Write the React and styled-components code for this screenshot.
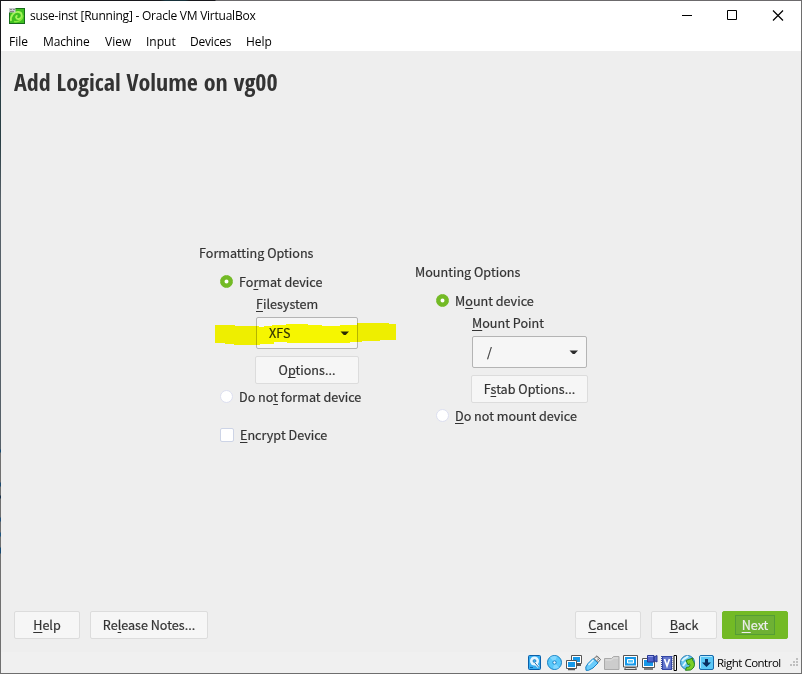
import React from "react";
import styled, { createGlobalStyle } from "styled-components";

const Global = createGlobalStyle`
  * { box-sizing: border-box; }
  body { margin: 0; background: #fff; overflow: hidden; }
`;

const Window = styled.div`
  width: 802px;
  height: 674px;
  display: flex;
  flex-direction: column;
  padding: 1px;
  background:
    linear-gradient(90deg, #17171b 0 160px, #163039 165px 185px, #17171b 190px 215px, #6c6a6c 216px) top / 100% 1px no-repeat,
    linear-gradient(180deg, #17181c 0 50px, #283e44 90px 140px, #566068 200px 449px, #174a72 450px 452px, #707070 453px 482px,
      #1c4b70 483px 486px, #707070 487px 495px, #17304a 496px 498px, #707070 499px 517px, #245078 518px 521px, #707070 522px 532px,
      #1f5680 533px 536px, #707070 537px 547px, #174a72 548px 553px, #707070 554px) left / 1px 100% no-repeat,
    #6e6e6e;
  color: #000;
  font: 12px/16px "Open Sans", "Noto Sans", sans-serif;
`;

const TitleBar = styled.header`
  display: flex;
  height: 29px;
  align-items: center;
  padding-left: 8px;
  background: #fff;
`;

const WindowTitle = styled.span`
  margin-left: 5px;
  letter-spacing: -0.24px;
`;

const Controls = styled.div`
  display: flex;
  margin-left: auto;
  gap: 34px;
  padding-right: 17px;
`;

const MenuBar = styled.nav`
  display: flex;
  height: 21px;
  align-items: center;
  padding: 3px 0 0 8px;
  gap: 16px;
  background: #fff;
  white-space: nowrap;
`;

const MenuItem = styled.span`
  flex: none;
  width: ${(p) => p.$w}px;
  letter-spacing: ${(p) => p.$track}px;
`;

const Guest = styled.main`
  display: flex;
  flex-direction: column;
  height: 601px;
  background: #eee;
  color: #333;
  font: 12.6px/22px "Noto Sans CJK SC", sans-serif;
  -webkit-text-stroke: 0.2px;
`;

const Heading = styled.h1`
  margin: 14px 0 0 13px;
  height: 34px;
  font: 700 24px/34px "Open Sans Condensed", "Open Sans", sans-serif;
  font-stretch: 75%;
  -webkit-text-stroke: 0;
  white-space: nowrap;
`;

const Columns = styled.div`
  position: relative;
  display: flex;
  align-items: flex-start;
  margin-top: 143px;
  padding-left: 198px;
`;

const Column = styled.section`
  display: flex;
  flex-direction: column;
  width: 216px;
  padding-top: ${(p) => p.$top || 0}px;
`;

const GroupTitle = styled.div`
  height: 22px;
  margin-bottom: 7px;
`;

const Choice = styled.label`
  display: flex;
  align-items: center;
  height: 22px;
  margin: ${(p) => p.$top || 0}px 0 0 21px;
  gap: 6px;
  white-space: nowrap;
`;

const Radio = styled.span`
  width: 13px;
  height: 13px;
  margin-bottom: 1px;
  border-radius: 50%;
  border: 1px solid ${(p) => (p.$on ? "#73ba25" : "#dcdff0")};
  background: ${(p) => (p.$on ? "radial-gradient(circle, #fff 1.4px, #73ba25 2.4px)" : "#fff")};
`;

const Check = styled.span`
  width: 14px;
  height: 14px;
  border: 1px solid #cdd4e6;
  border-radius: 2px;
  background: #fff;
`;

const FieldLabel = styled.div`
  height: 22px;
  margin-left: 57px;
`;

const Select = styled.div`
  display: flex;
  align-items: center;
  justify-content: space-between;
  width: ${(p) => p.$w}px;
  height: 32px;
  margin: 2px 0 7px 57px;
  padding: 0 8px 0 ${(p) => p.$pad}px;
  border: 1px solid #b4b4b4;
  border-radius: 2px;
  background: #f6f6f6;
`;

const Button = styled.div`
  display: flex;
  align-items: center;
  justify-content: center;
  flex: none;
  width: ${(p) => p.$w}px;
  height: 28px;
  margin-left: ${(p) => p.$left || 0}px;
  border: 1px solid ${(p) => (p.$primary ? "#73ba25" : "#dcdcdc")};
  border-radius: 2px;
  background: ${(p) => (p.$primary ? "#73ba25" : "#f6f6f6")};
  color: ${(p) => (p.$primary ? "#eee" : "#333")};
`;

const FocusRing = styled.span`
  display: flex;
  align-items: center;
  justify-content: center;
  width: 40px;
  height: 20px;
  border: 1px solid #559d35;
  background: #6eb134;
`;

const Key = styled.span`
  text-decoration: underline;
  text-decoration-thickness: 1px;
  text-underline-offset: 2px;
  text-decoration-skip-ink: none;
`;

const Marker = styled.svg`
  position: absolute;
  left: 214px;
  top: 81px;
  mix-blend-mode: multiply;
`;

const Footer = styled.footer`
  display: flex;
  margin-top: auto;
  padding: 0 13px 13px;
`;

const Spacer = styled.span`
  flex: 1;
`;

const StatusBar = styled.div`
  display: flex;
  flex: 1;
  align-items: center;
  justify-content: flex-end;
  gap: 3px;
  padding-right: 2px;
  background: #f0f0f0;
`;

const HostKey = styled.span`
  width: 70px;
  margin-left: -1px;
  font-size: 11.5px;
  letter-spacing: -0.5px;
  white-space: nowrap;
`;

const Arrow = () => (
  <svg width="9" height="5" viewBox="0 0 9 5"><path d="M.5 .5H9L5.7 4H3.8Z" fill="#2b2b2b" /></svg>
);

const menus = [
  ["File", 18, 0], ["Machine", 46, -0.15], ["View", 25, 0],
  ["Input", 28, 0], ["Devices", 40, -0.2], ["Help", 26, 0],
];

const AppIcon = () => (
  <svg width="16" height="16" viewBox="0 0 16 16">
    <rect width="16" height="16" fill="#176b1a" />
    <rect x="1" y="1" width="14" height="14" fill="#3fc020" />
    <path d="M2 13C1 8 5 3.500 9.500 4c4.500.500 4 6.500.5 7-3 .4-4-2.500-1.500-3.500" fill="none" stroke="#a6f45c" strokeWidth="1.800" />
    <path d="M5 13.500c5 1 8.500-2 9-6" fill="none" stroke="#86e83e" strokeWidth="1.600" />
    <rect width="6.500" height="4.500" fill="#c9ccd0" />
    <path d="M1 1.500h2m1 0h2M1 3.500h4" stroke="#888" />
  </svg>
);

const Icon = ({ children }) => (
  <svg width="16" height="16" viewBox="0 0 16 16">{children}</svg>
);

const DiskIcon = () => (
  <Icon>
    <rect x=".5" y=".5" width="12" height="14" rx="1" fill="#36aef2" stroke="#0b5fa8" />
    <circle cx="6.500" cy="6" r="4.500" fill="#e4f5ff" />
    <circle cx="6.500" cy="6" r="1.500" fill="#36aef2" stroke="#1769aa" strokeWidth=".6" />
    <path d="M7 8l3.500 4" stroke="#fff" strokeWidth="2.500" />
    <path d="M7 8l3.500 4M2 12.500h3" stroke="#1769aa" />
  </Icon>
);

const DiscIcon = () => (
  <Icon>
    <circle cx="7.500" cy="7.500" r="7" fill="#58c8fa" stroke="#1580c4" />
    <path d="M7.500 7.500L3 2.500A7 7 0 0 1 10 1.500zM7.500 7.500l4.500 5a7 7 0 0 1-6 1z" fill="#83d8ff" />
    <circle cx="7.500" cy="7.500" r="1.700" fill="#e9f7ff" stroke="#1580c4" />
  </Icon>
);

const NetworkIcon = () => (
  <Icon>
    <path d="M5.500 .5h10v8h-10z" fill="#fff" stroke="#555" />
    <path d="M7 2h7v5H7z" fill="#1598e8" />
    <path d="M10 10h5" stroke="#555" strokeWidth="2" />
    <path d="M.5 5.500h10v8H.5z" fill="#fff" stroke="#555" />
    <path d="M2 7h7v5H2z" fill="#1598e8" />
    <path d="M2 14.500h7" stroke="#555" strokeWidth="1.500" />
  </Icon>
);

const UsbIcon = () => (
  <Icon>
    <path d="M9 3.500L12 .8 15.500 4.500 13 7.500z" fill="#eee" stroke="#666" />
    <path d="M12 2.500l1 1M13.500 4l-1 1.500" stroke="#555" />
    <path d="M8 3.500L13 8l-5 5-4.500 2.300H1L.8 12 3 8.500z" fill="#6accfb" stroke="#1580c4" />
    <path d="M3.500 10l5-5" stroke="#d6f3ff" strokeWidth="1.500" />
  </Icon>
);

const FolderIcon = () => (
  <Icon>
    <path d="M.5 14.500v-11h7l2-2h5.500v13z" fill="#ccc" stroke="#aaa" />
    <path d="M1.500 5h6l2-2H14" fill="none" stroke="#e2e2e2" />
  </Icon>
);

const DisplayIcon = () => (
  <Icon>
    <path d="M.5 .5h14v11.500H.5z" fill="#fff" stroke="#555" />
    <path d="M2 2h11v8.500H2z" fill="#1598e8" />
    <path d="M4.500 4.500h6v3.500h-6z" fill="#59c7fc" stroke="#fff" />
    <path d="M2.500 12.500h10l1 2h-12z" fill="#ddd" stroke="#555" />
  </Icon>
);

const RecordIcon = () => (
  <Icon>
    <path d="M.5 3.500h12v9H.5z" fill="#fff" stroke="#555" />
    <path d="M2 5h9v6H2z" fill="#1598e8" />
    <path d="M2 14h9" stroke="#555" strokeWidth="1.500" />
    <path d="M5.500 .5h6.500v6.500H5.500zM12 2l3-1.500v6.500L12 5.500z" fill="#5262c8" stroke="#273895" />
    <path d="M6 1.500h5" stroke="#98a3ef" />
  </Icon>
);

const CpuIcon = () => (
  <Icon>
    <path d="M1 1h10v14H1z" fill="#3547a5" />
    <path d="M.5 1v14M11 1v14" stroke="#3547a5" strokeDasharray="1 1" />
    <path d="M2 2h8v12H2z" fill="#6275cb" />
    <path d="M3.500 4L6 11l2.500-7" fill="none" stroke="#fff" strokeWidth="1.700" />
    <path d="M13 .5h2.500v15H13z" fill="#fff" stroke="#000" />
  </Icon>
);

const MouseIcon = () => (
  <Icon>
    <circle cx="7.500" cy="7.500" r="7" fill="#65c5ef" stroke="#267ab5" />
    <path d="M2 6c3-4 5-3 6-5M3 11l3-4" fill="none" stroke="#d9f5ff" strokeWidth="2" />
    <path d="M6 5.500l7-2.500-.5 2c3.500 4 2 8-2 10l-5 .3 1-3c3 0 4-1 3-3.500l-1.500 1z" fill="#79ce28" stroke="#27801f" />
  </Icon>
);

const CaptureIcon = () => (
  <Icon>
    <rect x=".5" y=".5" width="14" height="14" rx="1.500" fill="#5bc8f7" stroke="#1769aa" />
    <path d="M1.500 13V1.500H13" fill="none" stroke="#b4eaff" />
    <path d="M6 4h3v3.500h3L7.500 12 3 7.500h3z" fill="#092e61" />
  </Icon>
);

const Grip = () => (
  <svg width="9" height="9" viewBox="0 0 9 9">
    <path d="M6 0h2v2H6zM3 3h2v2H3zM6 3h2v2H6zM0 6h2v2H0zM3 6h2v2H3zM6 6h2v2H6z" fill="#bfbfbf" />
  </svg>
);

export default function App() {
  return (
    <>
      <Global />
      <Window>
        <TitleBar>
          <AppIcon />
          <WindowTitle>suse-inst [Running] - Oracle VM VirtualBox</WindowTitle>
          <Controls>
            <svg width="12" height="12" viewBox="0 0 12 12"><path d="M2 5.500h10" stroke="#000" /></svg>
            <svg width="12" height="12" viewBox="0 0 12 12"><path d="M1.500 .5h9v9h-9z" fill="none" stroke="#000" /></svg>
            <svg width="12" height="12" viewBox="0 0 12 12"><path d="M1 .5l10 10M11 .5L1 10.500" stroke="#000" strokeWidth="1.200" /></svg>
          </Controls>
        </TitleBar>
        <MenuBar>
          {menus.map(([label, width, track]) => (
            <MenuItem key={label} $w={width} $track={track}>{label}</MenuItem>
          ))}
        </MenuBar>
        <Guest>
          <Heading>Add Logical Volume on vg00</Heading>
          <Columns>
            <Column>
              <GroupTitle>Formatting Options</GroupTitle>
              <Choice><Radio $on /><span>Fo<Key>r</Key>mat device</span></Choice>
              <FieldLabel><Key>F</Key>ilesystem</FieldLabel>
              <Select $w={102} $pad={12}>XFS<Arrow /></Select>
              <Button $w={104} $left={56}><span>O<Key>p</Key>tions...</span></Button>
              <Choice $top={2}><Radio /><span>Do no<Key>t</Key> format device</span></Choice>
              <Choice $top={16}><Check /><span><Key>E</Key>ncrypt Device</span></Choice>
            </Column>
            <Column $top={19}>
              <GroupTitle>Mounting Options</GroupTitle>
              <Choice><Radio $on /><span>M<Key>o</Key>unt device</span></Choice>
              <FieldLabel><Key>M</Key>ount Point</FieldLabel>
              <Select $w={115} $pad={14}>/<Arrow /></Select>
              <Button $w={117} $left={56}><span>F<Key>s</Key>tab Options...</span></Button>
              <Choice $top={2}><Radio /><span><Key>D</Key>o not mount device</span></Choice>
            </Column>
            <Marker width="181" height="22" viewBox="0 0 181 22">
              <path d="M0 2h20v1h24v1h5v-1h8v-1h14v-1h22v1h14v1h18v-1h17v-2h32v1h7v16h-16v1h-18v1h-12v1H72v-1H59v2h-14v1H19v-1H10v-1H0z" fill="#ffff00" />
            </Marker>
          </Columns>
          <Footer>
            <Button $w={66}><span><Key>H</Key>elp</span></Button>
            <Button $w={118} $left={10}><span>Re<Key>l</Key>ease Notes...</span></Button>
            <Spacer />
            <Button $w={66}><span><Key>C</Key>ancel</span></Button>
            <Button $w={66} $left={10}><span><Key>B</Key>ack</span></Button>
            <Button $w={66} $left={5} $primary><FocusRing><span><Key>N</Key>ext</span></FocusRing></Button>
          </Footer>
        </Guest>
        <StatusBar>
          <DiskIcon />
          <DiscIcon />
          <NetworkIcon />
          <UsbIcon />
          <FolderIcon />
          <DisplayIcon />
          <RecordIcon />
          <CpuIcon />
          <MouseIcon />
          <CaptureIcon />
          <HostKey>Right Control</HostKey>
          <Grip />
        </StatusBar>
      </Window>
    </>
  );
}
